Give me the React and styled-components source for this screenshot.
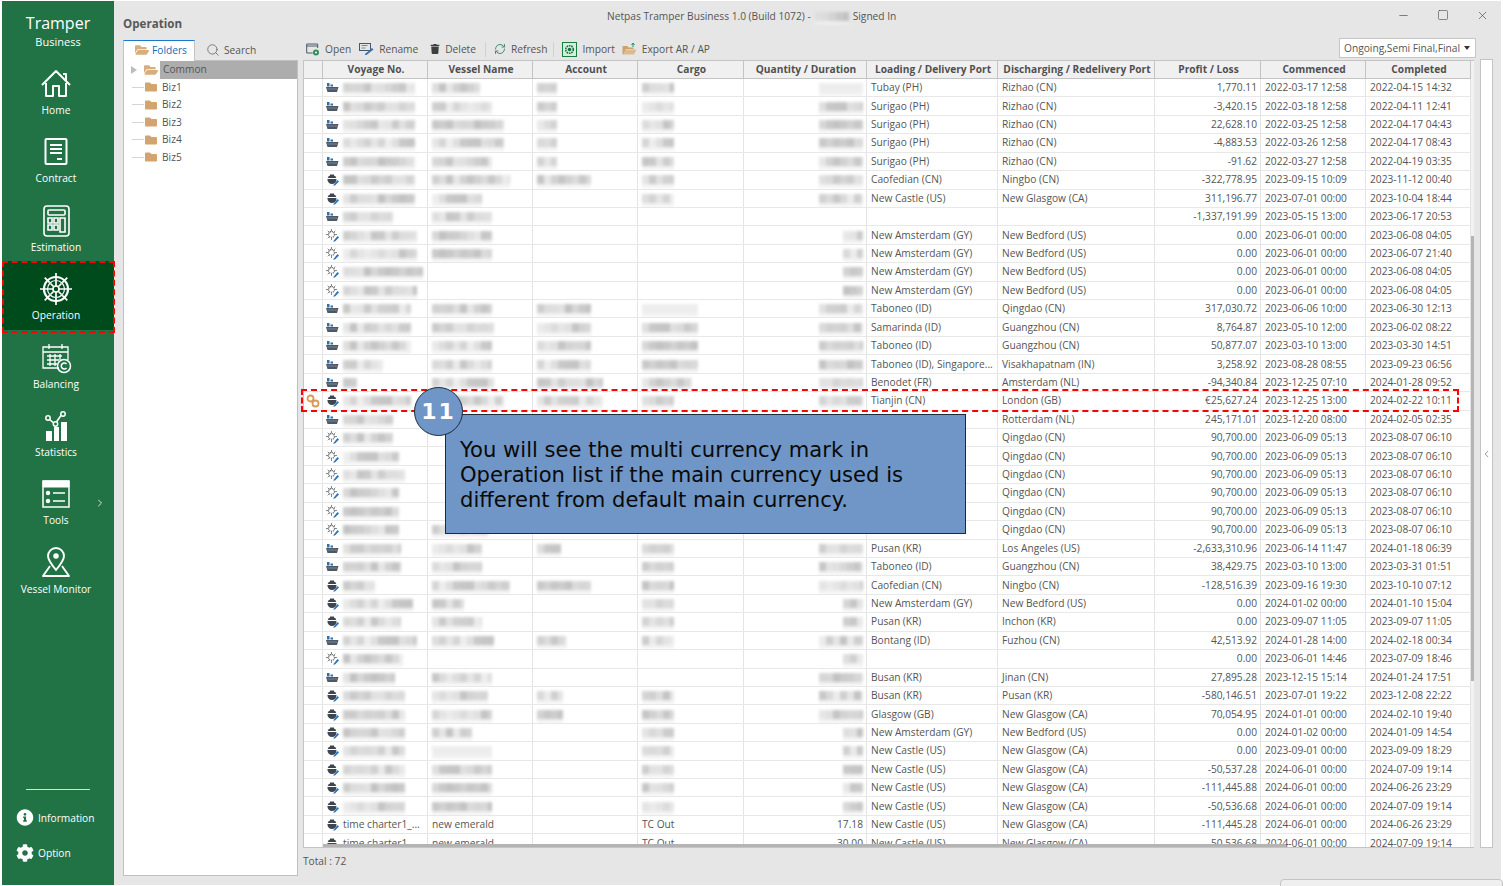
import styled, { createGlobalStyle } from "styled-components";
import { FaCog, FaInfoCircle, FaTrash, FaFolder, FaFolderOpen } from "react-icons/fa";
import { ChevronLeft, ChevronRight, Minus, Square, X, Search, RefreshCw } from "lucide-react";

const GlobalStyle = createGlobalStyle`
  html, body { margin: 0; padding: 0; background: #fff; }
  * { box-sizing: border-box; }
`;

const Page = styled.div`
  position: relative;
  width: 1503px;
  height: 886px;
  overflow: hidden;
  padding: 1px 2px 1px 2px;
  display: flex;
  font-family: "Open Sans", "Noto Sans", sans-serif;
  font-size: 10.2px;
  color: #555;
`;

const Sidebar = styled.nav`
  width: 112px;
  flex: none;
  background: #217346;
  color: #fff;
  display: flex;
  flex-direction: column;
  padding-top: 12px;
`;

const Brand = styled.div`
  height: 43px;
  text-align: center;
  font-size: 16px;
  line-height: 20px;
  small { display: block; font-size: 11px; line-height: 17px; }
`;

const NavItem = styled.div`
  position: relative;
  height: 68.4px;
  display: flex;
  flex-direction: column;
  align-items: center;
  padding: 11px 4px 0 0;
  background: ${(p) => (p.$active ? "#004b1c" : "transparent")};
  svg { display: block; height: 34px; }
  span { margin-top: 2px; line-height: 15px; white-space: nowrap; }
`;

const NavArrow = styled(ChevronRight)`
  position: absolute;
  right: 8px;
  top: 30px;
  opacity: 0.8;
  && { height: 14px; }
`;

const NavFoot = styled.div`
  margin-top: auto;
  padding-bottom: 15px;
`;

const Divider = styled.div`
  height: 1px;
  margin: 0 24px 10px 24px;
  background: #cfe3d7;
`;

const FootLink = styled.div`
  display: flex;
  align-items: center;
  gap: 4px;
  height: 35px;
  padding-left: 14px;
  svg { width: 18px; flex: none; }
`;

const Main = styled.main`
  flex: 1;
  min-width: 0;
  background: #e6e6e6;
  display: flex;
  flex-direction: column;
  padding: 0 0 9px 9px;
`;

const TopBar = styled.header`
  height: 39px;
  flex: none;
  display: flex;
  position: relative;
`;

const Heading = styled.h1`
  width: 484px;
  flex: none;
  margin: 15px 0 0 0;
  font-size: 11.6px;
  line-height: 16px;
  font-weight: 700;
  color: #595959;
`;

const WindowTitle = styled.div`
  display: flex;
  align-items: center;
  gap: 4px;
  height: 14px;
  margin-top: 8px;
  white-space: nowrap;
`;

const WindowButtons = styled.div`
  margin-left: auto;
  display: flex;
  gap: 27px;
  padding: 8px 12px 0 0;
  height: 20px;
  color: #444;
  svg { display: block; }
`;

const Workspace = styled.div`
  flex: 1;
  min-height: 0;
  display: flex;
`;

const FolderColumn = styled.section`
  width: 175px;
  flex: none;
  margin-right: 5px;
  display: flex;
  flex-direction: column;
`;

const Tabs = styled.div`
  height: 20px;
  flex: none;
  display: flex;
  align-items: flex-start;
`;

const Tab = styled.div`
  height: 21px;
  display: flex;
  align-items: center;
  gap: ${(p) => (p.$active ? "3px" : "4px")};
  padding: 0 7px 2px ${(p) => (p.$active ? "11px" : "11px")};
  position: relative;
  z-index: 1;
  color: ${(p) => (p.$active ? "#0f6cbd" : "#555")};
  background: ${(p) => (p.$active ? "#fff" : "transparent")};
  border-top: ${(p) => (p.$active ? "1px solid #1b78d0" : "1px solid transparent")};
  border-left: ${(p) => (p.$active ? "1px solid #c4c4c4" : "0")};
  border-right: ${(p) => (p.$active ? "1px solid #c4c4c4" : "0")};
`;

const Tree = styled.div`
  flex: 1;
  background: #fff;
  border: 1px solid #c0c0c0;
  padding: 0;
`;

const TreeRow = styled.div`
  height: 17.5px;
  display: flex;
  align-items: center;
  padding-left: ${(p) => (p.$root ? "7px" : "8px")};
  color: #555;
`;

const TreeTwig = styled.i`
  width: 12px;
  height: 1px;
  background: #d5d5d5;
  flex: none;
  margin-right: 1px;
`;

const TreeCaret = styled.i`
  width: 0;
  height: 0;
  flex: none;
  border-left: 6px solid #bdbdbd;
  border-top: 4px solid transparent;
  border-bottom: 4px solid transparent;
  margin-right: 7px;
`;

const TreeLabel = styled.span`
  flex: 1;
  height: 17.5px;
  line-height: 17.5px;
  margin-left: 2px;
  padding-left: 3px;
  background: ${(p) => (p.$selected ? "#adadad" : "transparent")};
`;

const ListColumn = styled.section`
  width: 1171px;
  flex: none;
  display: flex;
  flex-direction: column;
`;

const Toolbar = styled.div`
  height: 20px;
  flex: none;
  padding-bottom: 2px;
  display: flex;
  align-items: center;
  justify-content: space-between;
`;

const ToolGroup = styled.div`
  display: flex;
  align-items: center;
  padding-left: 3px;
`;

const ToolButton = styled.div`
  display: flex;
  align-items: center;
  gap: 5px;
  margin-right: ${(p) => p.$gap || 11}px;
  white-space: nowrap;
  svg { display: block; flex: none; }
`;

const ToolSep = styled.i`
  width: 1px;
  height: 15px;
  background: #d0d0d0;
  margin-right: 8px;
`;

const Combo = styled.div`
  width: 137px;
  height: 20px;
  margin: -2px -2px 0 0;
  background: #fff;
  border: 1px solid #c6c6c6;
  display: flex;
  align-items: center;
  justify-content: space-between;
  padding: 0 5px 0 4px;
  white-space: nowrap;
  &::after {
    content: "";
    border-top: 4px solid #333;
    border-left: 3.5px solid transparent;
    border-right: 3.5px solid transparent;
  }
`;

const Table = styled.div`
  position: relative;
  height: 788px;
  flex: none;
  display: flex;
  border: 1px solid #c4c4c4;
  border-width: 1px 0 1px 1px;
  background: #fff;
  overflow: hidden;
`;

const Grid = styled.div`
  width: 1167px;
  flex: none;
  overflow: hidden;
`;

const columns = "19px 105px 105px 105px 106px 123px 131px 157px 106px 105px 105px";

const HeaderRow = styled.div`
  display: grid;
  grid-template-columns: ${columns};
  height: 18px;
  background: #f0f0f0;
  border-bottom: 1px solid #c4c4c4;
`;

const HeaderCell = styled.div`
  border-right: 1px solid #c4c4c4;
  padding-left: 2px;
  text-align: center;
  line-height: 17px;
  font-weight: 700;
  color: #505050;
  white-space: nowrap;
  overflow: hidden;
`;

const Row = styled.div`
  display: grid;
  grid-template-columns: ${columns};
  height: 18.43px;
  border-bottom: 1px solid #e8e8e8;
`;

const Cell = styled.div`
  border-right: 1px solid #e4e4e4;
  display: flex;
  align-items: center;
  justify-content: ${(p) => (p.$right ? "flex-end" : "flex-start")};
  padding: 0 3px 0 4px;
  white-space: nowrap;
  overflow: hidden;
  line-height: 17px;
`;

const MarkCell = styled(Cell)`
  padding: 0 0 0 2px;
`;

const VoyageCell = styled(Cell)`
  padding-left: 3px;
  gap: 4px;
  svg { flex: none; }
`;

const Smudge = styled.i`
  display: block;
  height: 9px;
  flex: none;
  filter: blur(1.6px);
  opacity: 0.8;
  box-shadow: 0 4px 0 #f0f0f0;
`;

const VScroll = styled.div`
  flex: 1;
  background: #f2f2f2;
  padding-top: 175px;
`;

const VThumb = styled.div`
  height: 445px;
  background: #b4b4b4;
`;

const HThumb = styled.div`
  position: absolute;
  left: 19px;
  bottom: 0;
  width: 963px;
  height: 3px;
  background: #b4b4b4;
`;

const Total = styled.div`
  height: 27px;
  line-height: 27px;
  flex: none;
  color: #555;
`;

const Collapse = styled.aside`
  width: 13px;
  height: 789px;
  flex: none;
  margin-left: 6px;
  margin-top: 19px;
  background: #fff;
  border: 1px solid #c4c4c4;
  display: flex;
  align-items: center;
  justify-content: center;
  color: #666;
`;

const Highlight = styled.div`
  position: absolute;
  left: ${(p) => p.$x}px;
  top: ${(p) => p.$y}px;
  width: ${(p) => p.$w}px;
  height: ${(p) => p.$h}px;
  border: 2px dashed #f00;
  pointer-events: none;
`;

const Callout = styled.div`
  position: absolute;
  left: 445px;
  top: 414px;
  width: 521px;
  height: 120px;
  background: #6f96c7;
  border: 1px solid #1c2a3c;
  padding: 22px 14px 0 14px;
  font-family: "DejaVu Sans", sans-serif;
  font-size: 21.1px;
  line-height: 25px;
  white-space: nowrap;
  color: #0a0a0a;
`;

const Badge = styled.div`
  position: absolute;
  left: 414px;
  top: 387px;
  width: 49px;
  height: 49px;
  border-radius: 50%;
  background: #6f96c7;
  border: 1.5px solid #1c2a3c;
  font-family: "DejaVu Sans", sans-serif;
  font-size: 22px;
  font-weight: 700;
  letter-spacing: 2px;
  color: #fff;
  display: flex;
  align-items: center;
  justify-content: center;
`;

const CornerTab = styled.div`
  position: absolute;
  left: 1280px;
  top: 879px;
  width: 223px;
  height: 20px;
  border: 1px solid #c4c4c4;
  border-radius: 4px;
  background: #efefef;
`;

/* sidebar drawings */
const HomeIcon = () => (
  <svg viewBox="0 0 32 34" width="32" fill="none" stroke="#fff" strokeWidth="2">
    <path d="M2 18 16 4l14 14M23 7h3v7M6 16v13h7V19h6v10h7V16" strokeLinejoin="round" />
  </svg>
);
const ContractIcon = () => (
  <svg viewBox="0 0 32 34" width="32" fill="none" stroke="#fff" strokeWidth="2">
    <rect x="5.500" y="4" width="21" height="25" rx="1" />
    <path d="M10 10h12M10 14h12M10 18h12M17 24h5" />
  </svg>
);
const EstimationIcon = () => (
  <svg viewBox="0 0 32 34" width="32" fill="none" stroke="#fff" strokeWidth="1.6">
    <rect x="4" y="2" width="25" height="30" rx="3" />
    <rect x="8" y="6" width="17" height="5" rx="1" />
    <path d="M8 14h4v5H8zM14 14h4v5h-4zM8 21h4v5H8zM14 21h4v5h-4zM20 14h5v14h-5z" />
  </svg>
);
const WheelIcon = () => (
  <svg viewBox="0 0 34 34" width="34" fill="none" stroke="#fff">
    <circle cx="17" cy="17" r="12" strokeWidth="2.2" />
    <circle cx="17" cy="17" r="8.500" strokeWidth="1.2" />
    <circle cx="17" cy="17" r="3" strokeWidth="1.6" />
    <path
      d="M17 1v7M17 26v7M1 17h7M26 17h7M5.700 5.700l5 5M23.300 23.300l5 5M28.300 5.700l-5 5M10.700 23.300l-5 5M17 9v5M17 20v5M9 17h5M20 17h5M11.500 11.500l3 3M19.500 19.500l3 3M22.500 11.500l-3 3M14.500 19.500l-3 3"
      strokeWidth="1.7"
    />
  </svg>
);
const BalanceIcon = () => (
  <svg viewBox="0 0 32 34" width="32" fill="none" stroke="#fff" strokeWidth="1.3">
    <path d="M19 27H3V6h25v13M3 11h25M9 3v5M22 3v5M7 15h15M7 19h12M7 23h10M10 13v12M15 13v12M20 13v6" />
    <circle cx="24" cy="25" r="6.500" strokeWidth="1.5" />
    <path d="M26.500 23a3 3 0 1 0 0 4" strokeWidth="1.5" />
  </svg>
);
const StatsIcon = () => (
  <svg viewBox="0 0 32 34" width="32">
    <path d="M6 22h6v10H6zM14 18h5v14h-5zM21 13h6v19h-6z" fill="#fff" />
    <path d="M9 10l6 5 7-10" fill="none" stroke="#fff" strokeWidth="1.6" />
    <circle cx="8" cy="9" r="2.2" fill="#217346" stroke="#fff" strokeWidth="1.5" />
    <circle cx="15.500" cy="15" r="2.2" fill="#217346" stroke="#fff" strokeWidth="1.5" />
    <circle cx="23" cy="5" r="2.2" fill="#217346" stroke="#fff" strokeWidth="1.5" />
  </svg>
);
const ToolsIcon = () => (
  <svg viewBox="0 0 32 34" width="32" fill="none" stroke="#fff">
    <rect x="3" y="4" width="26" height="26" strokeWidth="1.5" />
    <path d="M3 4h26v6H3z" fill="#fff" />
    <circle cx="8" cy="16" r="2.2" fill="#fff" stroke="none" />
    <circle cx="8" cy="24" r="2.2" fill="#fff" stroke="none" />
    <path d="M13 16h12M13 24h12" strokeWidth="1.5" />
  </svg>
);
const MonitorIcon = () => (
  <svg viewBox="0 0 32 34" width="32" fill="none" stroke="#fff" strokeWidth="1.9">
    <path d="M16 24C11 18 8 14 8 10a8 8 0 0 1 16 0c0 4-3 8-8 14z" />
    <circle cx="16" cy="10" r="1.800" fill="#fff" />
    <path d="M10 20l-7 10h26l-7-10" strokeLinejoin="round" />
  </svg>
);

/* toolbar drawings */
const OpenIcon = () => (
  <svg viewBox="0 0 14 14" width="14" height="14" fill="none">
    <path d="M.7 11V2h11v4M.7 4h11M.7 11h6" stroke="#47586e" />
    <circle cx="10" cy="10.500" r="3" fill="#2f8f5a" />
    <circle cx="10" cy="10.500" r="1" fill="#fff" />
  </svg>
);
const RenameIcon = () => (
  <svg viewBox="0 0 15 14" width="15" height="14" fill="none">
    <rect x=".5" y="1.500" width="11" height="7" stroke="#47586e" />
    <path d="M2.500 3.500h6M2.500 6h4" stroke="#7b8794" />
    <path d="M6 12l7-6 1.500 1.500-7 5.500H6z" fill="#2f72b8" />
  </svg>
);
const ImportIcon = () => (
  <svg viewBox="0 0 15 15" width="15" height="15">
    <rect x=".5" y=".5" width="14" height="14" fill="#d8ecdf" stroke="#15803d" />
    <circle cx="7.500" cy="7.500" r="3.800" fill="none" stroke="#15703a" strokeWidth="1.6" strokeDasharray="1.6 .8" />
    <circle cx="7.500" cy="7.500" r="1.800" fill="#15703a" />
  </svg>
);
const ExportIcon = () => (
  <svg viewBox="0 0 15 14" width="15" height="14">
    <path d="M.5 4h5l1 1.500h5V7H4L1.500 12.500h-1z" fill="#cda26f" />
    <path d="M4 7.500h10.500L12 12.500H1.500z" fill="#ddb98c" />
    <path d="M11 5V1.500M9.500 3 11 1l1.500 2" stroke="#2f8f5a" fill="none" />
  </svg>
);

/* row drawings */
const ShipIcon = () => (
  <svg viewBox="0 0 13 11" width="13" height="11">
    <path d="M1 1h2.500v3.500H1zM4.500 2.500H7v2H4.500z" fill="#2f6fa8" />
    <path d="M0 5h12.500l-1.500 5H1.500z" fill="#4d5966" />
    <path d="M1.500 7h9.500" stroke="#8895a3" strokeWidth=".7" />
  </svg>
);
const PotIcon = () => (
  <svg viewBox="0 0 13 13" width="13" height="13">
    <path d="M4 1.500h4V3H4z" fill="#3d4650" />
    <circle cx="6" cy="6.500" r="4.500" fill="#3d4650" />
    <path d="M1 5.500h10" stroke="#fff" strokeWidth="1" />
    <path d="M7 12.500l4.500-5.500 1.500 1.500-4 4z" fill="#2f72b8" />
  </svg>
);
const GearIcon = () => (
  <svg viewBox="0 0 13 13" width="13" height="13" fill="none">
    <circle cx="5.500" cy="5.500" r="3" stroke="#6f7378" strokeWidth="1.500" strokeDasharray="1.200 .8" />
    <path d="M5.500 0v2.500M0 5.500h2.500M8.500 5.500H11M1.700 1.700l2 2M9.300 1.700l-2 2M1.700 9.300l2-2M5.500 8.500V11" stroke="#85888c" />
    <path d="M7 12.500l4.500-5.500 1.500 1.500-4 4z" fill="#2f72b8" />
  </svg>
);
const LinkIcon = () => (
  <svg viewBox="0 0 14 14" width="14" height="14" fill="none" stroke="#d99a55" strokeWidth="1.800">
    <circle cx="4.500" cy="4.500" r="3" />
    <circle cx="9.500" cy="9.500" r="3" />
  </svg>
);

const rowIcons = { s: ShipIcon, p: PotIcon, g: GearIcon };

const navItems = [
  { label: "Home", Icon: HomeIcon },
  { label: "Contract", Icon: ContractIcon },
  { label: "Estimation", Icon: EstimationIcon },
  { label: "Operation", Icon: WheelIcon, active: true },
  { label: "Balancing", Icon: BalanceIcon },
  { label: "Statistics", Icon: StatsIcon },
  { label: "Tools", Icon: ToolsIcon, arrow: true },
  { label: "Vessel Monitor", Icon: MonitorIcon },
];

const headers = [
  "",
  "Voyage No.",
  "Vessel Name",
  "Account",
  "Cargo",
  "Quantity / Duration",
  "Loading / Delivery Port",
  "Discharging / Redelivery Port",
  "Profit / Loss",
  "Commenced",
  "Completed",
];

const NA = "New Amsterdam (GY)";
const NB = "New Bedford (US)";
const NC = "New Castle (US)";
const NG = "New Glasgow (CA)";

// icon, loading, discharging, profit, commenced, completed, smudge widths
const rows = [
  ["s", "Tubay (PH)", "Rizhao (CN)", "1,770.11", "2022-03-17 12:58", "2022-04-15 14:32", [72, 48, 20, 32, 44]],
  ["s", "Surigao (PH)", "Rizhao (CN)", "-3,420.15", "2022-03-18 12:58", "2022-04-11 12:41", [72, 60, 20, 32, 44]],
  ["s", "Surigao (PH)", "Rizhao (CN)", "22,628.10", "2022-03-25 12:58", "2022-04-17 04:43", [72, 72, 20, 32, 44]],
  ["s", "Surigao (PH)", "Rizhao (CN)", "-4,883.53", "2022-03-26 12:58", "2022-04-17 08:43", [72, 72, 20, 32, 44]],
  ["s", "Surigao (PH)", "Rizhao (CN)", "-91.62", "2022-03-27 12:58", "2022-04-19 03:35", [72, 60, 20, 32, 44]],
  ["p", "Caofedian (CN)", "Ningbo (CN)", "-322,778.95", "2023-09-15 10:09", "2023-11-12 00:40", [72, 78, 54, 32, 44]],
  ["p", NC, NG, "311,196.77", "2023-07-01 00:00", "2023-10-04 18:44", [72, 50, 0, 32, 44]],
  ["s", "", "", "-1,337,191.99", "2023-05-15 13:00", "2023-06-17 20:53", [50, 60, 0, 0, 0]],
  ["g", NA, NB, "0.00", "2023-06-01 00:00", "2023-06-08 04:05", [74, 60, 0, 0, 20]],
  ["g", NA, NB, "0.00", "2023-06-01 00:00", "2023-06-07 21:40", [74, 60, 0, 0, 20]],
  ["g", NA, NB, "0.00", "2023-06-01 00:00", "2023-06-08 04:05", [80, 0, 0, 0, 20]],
  ["g", NA, NB, "0.00", "2023-06-01 00:00", "2023-06-08 04:05", [74, 0, 0, 0, 20]],
  ["s", "Taboneo (ID)", "Qingdao (CN)", "317,030.72", "2023-06-06 10:00", "2023-06-30 12:13", [68, 60, 54, 56, 44]],
  ["s", "Samarinda (ID)", "Guangzhou (CN)", "8,764.87", "2023-05-10 12:00", "2023-06-02 08:22", [68, 62, 54, 56, 44]],
  ["s", "Taboneo (ID)", "Guangzhou (CN)", "50,877.07", "2023-03-10 13:00", "2023-03-30 14:51", [68, 60, 54, 56, 44]],
  ["s", "Taboneo (ID), Singapore...", "Visakhapatnam (IN)", "3,258.92", "2023-08-28 08:55", "2023-09-23 06:56", [40, 60, 54, 56, 44]],
  ["s", "Benodet (FR)", "Amsterdam (NL)", "-94,340.84", "2023-12-25 07:10", "2024-01-28 09:52", [14, 62, 66, 50, 44]],
  ["p", "Tianjin (CN)", "London (GB)", "€25,627.24", "2023-12-25 13:00", "2024-02-22 10:11", [68, 72, 66, 32, 44], true],
  ["s", "", "Rotterdam (NL)", "245,171.01", "2023-12-20 08:00", "2024-02-05 02:35", [50, 0, 0, 0, 0]],
  ["g", "", "Qingdao (CN)", "90,700.00", "2023-06-09 05:13", "2023-08-07 06:10", [50, 0, 0, 0, 0]],
  ["g", "", "Qingdao (CN)", "90,700.00", "2023-06-09 05:13", "2023-08-07 06:10", [56, 0, 0, 0, 0]],
  ["g", "", "Qingdao (CN)", "90,700.00", "2023-06-09 05:13", "2023-08-07 06:10", [62, 0, 0, 0, 0]],
  ["g", "", "Qingdao (CN)", "90,700.00", "2023-06-09 05:13", "2023-08-07 06:10", [56, 0, 0, 0, 0]],
  ["g", "", "Qingdao (CN)", "90,700.00", "2023-06-09 05:13", "2023-08-07 06:10", [56, 0, 0, 0, 0]],
  ["g", "", "Qingdao (CN)", "90,700.00", "2023-06-09 05:13", "2023-08-07 06:10", [56, 56, 0, 0, 0]],
  ["s", "Pusan (KR)", "Los Angeles (US)", "-2,633,310.96", "2023-06-14 11:47", "2024-01-18 06:39", [58, 50, 24, 32, 44]],
  ["s", "Taboneo (ID)", "Guangzhou (CN)", "38,429.75", "2023-03-10 13:00", "2023-03-31 01:51", [58, 50, 0, 32, 44]],
  ["p", "Caofedian (CN)", "Ningbo (CN)", "-128,516.39", "2023-09-16 19:30", "2023-10-10 07:12", [32, 78, 54, 32, 44]],
  ["p", NA, NB, "0.00", "2024-01-02 00:00", "2024-01-10 15:04", [70, 32, 0, 32, 20]],
  ["p", "Pusan (KR)", "Inchon (KR)", "0.00", "2023-09-07 11:05", "2023-09-07 11:05", [58, 50, 0, 32, 20]],
  ["s", "Bontang (ID)", "Fuzhou (CN)", "42,513.92", "2024-01-28 14:00", "2024-02-18 00:34", [74, 62, 30, 32, 44]],
  ["g", "", "", "0.00", "2023-06-01 14:46", "2023-07-09 18:46", [60, 0, 0, 0, 20]],
  ["s", "Busan (KR)", "Jinan (CN)", "27,895.28", "2023-12-15 15:14", "2024-01-24 17:51", [52, 60, 0, 0, 44]],
  ["p", "Busan (KR)", "Pusan (KR)", "-580,146.51", "2023-07-01 19:22", "2023-12-08 22:22", [62, 56, 26, 32, 44]],
  ["p", "Glasgow (GB)", NG, "70,054.95", "2024-01-01 00:00", "2024-02-10 19:40", [62, 60, 26, 32, 44]],
  ["p", NA, NB, "0.00", "2024-01-02 00:00", "2024-01-09 14:54", [62, 40, 0, 32, 20]],
  ["p", NC, NG, "0.00", "2023-09-01 00:00", "2023-09-09 18:29", [62, 60, 0, 32, 20]],
  ["p", NC, NG, "-50,537.28", "2024-06-01 00:00", "2024-07-09 19:14", [62, 60, 0, 32, 20]],
  ["p", NC, NG, "-111,445.88", "2024-06-01 00:00", "2024-06-26 23:29", [62, 60, 0, 32, 20]],
  ["p", NC, NG, "-50,536.68", "2024-06-01 00:00", "2024-07-09 19:14", [62, 60, 0, 32, 20]],
  ["p", NC, NG, "-111,445.28", "2024-06-01 00:00", "2024-06-26 23:29", null, false, "17.18"],
  ["p", NC, NG, "-50,536.68", "2024-06-01 00:00", "2024-07-09 19:14", null, false, "30.00"],
];

// mottled grey strip standing in for the masked text
const smudgeStyle = (w, seed) => {
  const stops = [];
  let x = 0;
  let i = seed;
  while (x < w) {
    i = (i * 37 + 11) % 101;
    const g = 180 + (i % 55);
    stops.push(`rgb(${g},${g},${g}) ${x}px ${x + 7}px`);
    x += 7;
  }
  return { width: w, background: `linear-gradient(90deg, ${stops.join(", ")})` };
};

const Blur = ({ w, seed }) => (w ? <Smudge style={smudgeStyle(w, seed)} /> : null);

const App = () => {
  return (
    <Page>
      <GlobalStyle />
      <Sidebar>
        <Brand>
          Tramper
          <small>Business</small>
        </Brand>
        {navItems.map(({ label, Icon, active, arrow }) => (
          <NavItem key={label} $active={active}>
            <Icon />
            <span>{label}</span>
            {arrow && <NavArrow size={12} />}
          </NavItem>
        ))}
        <NavFoot>
          <Divider />
          <FootLink>
            <FaInfoCircle size={17} />
            Information
          </FootLink>
          <FootLink>
            <FaCog size={18} />
            Option
          </FootLink>
        </NavFoot>
      </Sidebar>

      <Main>
        <TopBar>
          <Heading>Operation</Heading>
          <WindowTitle>
            Netpas Tramper Business 1.0 (Build 1072) -
            <Smudge style={smudgeStyle(34, 5)} />
            Signed In
          </WindowTitle>
          <WindowButtons>
            <Minus size={13} strokeWidth={1.2} />
            <Square size={12} strokeWidth={1.2} />
            <X size={13} strokeWidth={1.2} />
          </WindowButtons>
        </TopBar>

        <Workspace>
          <FolderColumn>
            <Tabs>
              <Tab $active>
                <FaFolderOpen size={14} color="#d9ae7c" />
                Folders
              </Tab>
              <Tab>
                <Search size={14} color="#666" strokeWidth={1.4} />
                Search
              </Tab>
            </Tabs>
            <Tree>
              <TreeRow $root>
                <TreeCaret />
                <FaFolderOpen size={14} color="#d9ae7c" />
                <TreeLabel $selected>Common</TreeLabel>
              </TreeRow>
              {["Biz1", "Biz2", "Biz3", "Biz4", "Biz5"].map((name) => (
                <TreeRow key={name}>
                  <TreeTwig />
                  <FaFolder size={12} color="#d2a46f" />
                  <TreeLabel>{name}</TreeLabel>
                </TreeRow>
              ))}
            </Tree>
          </FolderColumn>

          <ListColumn>
            <Toolbar>
              <ToolGroup>
                <ToolButton $gap={8}>
                  <OpenIcon />
                  Open
                </ToolButton>
                <ToolButton $gap={12}>
                  <RenameIcon />
                  Rename
                </ToolButton>
                <ToolButton $gap={9}>
                  <FaTrash size={10} color="#3e3e3e" />
                  Delete
                </ToolButton>
                <ToolSep />
                <ToolButton $gap={6}>
                  <RefreshCw size={12} color="#3f8f6f" />
                  Refresh
                </ToolButton>
                <ToolSep />
                <ToolButton $gap={7}>
                  <ImportIcon />
                  Import
                </ToolButton>
                <ToolButton>
                  <ExportIcon />
                  Export AR / AP
                </ToolButton>
              </ToolGroup>
              <Combo>Ongoing,Semi Final,Final</Combo>
            </Toolbar>

            <Table>
              <Grid>
                <HeaderRow>
                  {headers.map((h) => (
                    <HeaderCell key={h}>{h}</HeaderCell>
                  ))}
                </HeaderRow>
                {rows.map(([icon, load, disch, profit, start, end, blur, linked, qty], i) => {
                  const Icon = rowIcons[icon];
                  return (
                    <Row key={i}>
                      <MarkCell>{linked && <LinkIcon />}</MarkCell>
                      <VoyageCell>
                        <Icon />
                        {blur ? <Blur w={blur[0]} seed={i + 3} /> : "time charter1_..."}
                      </VoyageCell>
                      <Cell>{blur ? <Blur w={blur[1]} seed={i + 17} /> : "new emerald"}</Cell>
                      <Cell>{blur && <Blur w={blur[2]} seed={i + 29} />}</Cell>
                      <Cell>{blur ? <Blur w={blur[3]} seed={i + 41} /> : "TC Out"}</Cell>
                      <Cell $right>{blur ? <Blur w={blur[4]} seed={i + 53} /> : qty}</Cell>
                      <Cell>{load}</Cell>
                      <Cell>{disch}</Cell>
                      <Cell $right>{profit}</Cell>
                      <Cell>{start}</Cell>
                      <Cell>{end}</Cell>
                    </Row>
                  );
                })}
              </Grid>
              <VScroll>
                <VThumb />
              </VScroll>
              <HThumb />
            </Table>
            <Total>Total : 72</Total>
          </ListColumn>

          <Collapse>
            <ChevronLeft size={16} strokeWidth={1.5} />
          </Collapse>
        </Workspace>
      </Main>

      <Highlight $x={2} $y={261} $w={113} $h={72} />
      <Highlight $x={301} $y={389} $w={1158} $h={23} />
      <Callout>
        You will see the multi currency mark in
        <br />
        Operation list if the main currency used is
        <br />
        different from default main currency.
      </Callout>
      <Badge>11</Badge>
      <CornerTab />
    </Page>
  );
};

export default App;
